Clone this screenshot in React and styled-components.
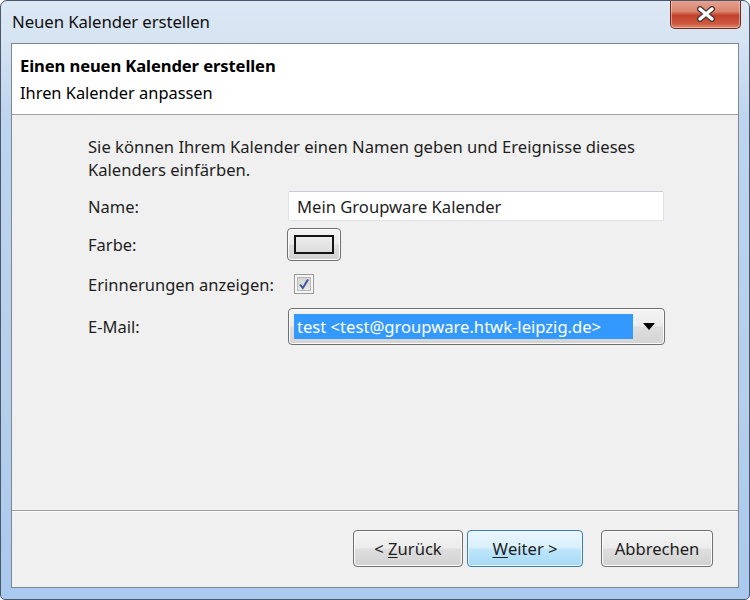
import React from "react";
import styled, { createGlobalStyle } from "styled-components";

const Global = createGlobalStyle`
  html, body { margin: 0; padding: 0; background: #ffffff; }
  body { font-family: "Noto Sans", "Open Sans", sans-serif; }
  * { box-sizing: border-box; }
`;

const Window = styled.div`
  width: 750px;
  height: 600px;
  display: flex;
  flex-direction: column;
  border: 1px solid #4a5869;
  border-radius: 7px 7px 5px 5px;
  background: linear-gradient(180deg, #dde8f4 0px, #d5e3f2 40px, #bcd4ee 120px, #b5cfec 400px, #a9c9ee 100%);
  overflow: hidden;
  font-family: "Noto Sans", "Open Sans", sans-serif;
  color: #1e1e1e;
`;

const TitleBar = styled.div`
  height: 42px;
  flex: none;
  display: flex;
  justify-content: space-between;
  align-items: flex-start;
  padding: 0 8px 0 11px;
`;

const Title = styled.div`
  font-size: 16.8px;
  line-height: 42px;
  color: #111;
  letter-spacing: -0.1px;
`;

const CloseButton = styled.div`
  width: 71px;
  height: 29px;
  margin-top: -1px;
  border: 1px solid #6b2a22;
  border-top: none;
  border-radius: 0 0 5px 5px;
  background: linear-gradient(180deg, #e8a493 0%, #d98670 40%, #c4402a 55%, #cc5a40 85%, #e08a6a 100%);
  box-shadow: inset 0 0 0 1px rgba(255, 220, 200, 0.5);
  display: flex;
  align-items: center;
  justify-content: center;
`;

const Client = styled.div`
  flex: 1;
  margin: 0 10px 11px 10px;
  border: 1px solid #7d8894;
  background: #f0f0f0;
  display: flex;
  flex-direction: column;
`;

const Header = styled.div`
  height: 71px;
  flex: none;
  background: #ffffff;
  border-bottom: 1px solid #a0a0a0;
  padding: 12px 0 0 8px;
`;

const HeaderTitle = styled.div`
  font-size: 16.6px;
  font-weight: 700;
  line-height: 20px;
  color: #000;
  letter-spacing: -0.1px;
`;

const HeaderSub = styled.div`
  font-size: 16.4px;
  line-height: 20px;
  margin-top: 7px;
  color: #000;
`;

const Body = styled.div`
  flex: 1;
  padding: 20px 0 0 76px;
  display: flex;
  flex-direction: column;
`;

const Intro = styled.p`
  margin: 0 0 6px 0;
  width: 600px;
  font-size: 16.6px;
  line-height: 23px;
  color: #1e1e1e;
`;

const Row = styled.div`
  height: ${(p) => p.$h}px;
  display: flex;
  align-items: center;
`;

const Label = styled.div`
  width: 200px;
  flex: none;
  font-size: 16.5px;
  color: #1e1e1e;
`;

const TextBox = styled.div`
  width: 376px;
  height: 30px;
  background: #fff;
  border: 1px solid #dfe3e8;
  border-top-color: #c9ccd1;
  border-radius: 2px;
  font-size: 16.6px;
  display: flex;
  align-items: center;
  padding-left: 8px;
  color: #1e1e1e;
`;

const ColorButton = styled.div`
  width: 54px;
  height: 33px;
  margin-left: -1px;
  border: 1px solid #707070;
  border-radius: 4px;
  background: linear-gradient(180deg, #f4f4f4 0%, #ececec 48%, #dedede 52%, #d2d2d2 100%);
  box-shadow: inset 0 0 0 1px #fcfcfc;
  display: flex;
  align-items: center;
  justify-content: center;
`;

const Swatch = styled.div`
  width: 40px;
  height: 19px;
  border: 2px solid #151515;
  background: linear-gradient(180deg, #ededed 0%, #dcdcdc 100%);
`;

const Check = styled.div`
  width: 20px;
  height: 20px;
  margin-left: 6px;
  border: 1px solid #9a9a9a;
  background: #f4f4f4;
  padding: 2px;
  display: flex;
`;

const CheckInner = styled.div`
  flex: 1;
  border: 1px solid #b8b8b8;
  background: linear-gradient(180deg, #d4d4d4 0%, #e8e8e8 100%);
  display: flex;
  align-items: center;
  justify-content: center;
`;

const Combo = styled.div`
  width: 377px;
  height: 37px;
  border: 1px solid #707070;
  border-radius: 4px;
  background: linear-gradient(180deg, #f4f4f4 0%, #ececec 48%, #dedede 52%, #d4d4d4 100%);
  box-shadow: inset 0 0 0 1px #fafafa;
  display: flex;
  align-items: center;
  padding: 0 0 0 5px;
`;

const Selected = styled.div`
  width: 339px;
  height: 25px;
  background: #3399ff;
  color: #fff;
  font-size: 16.6px;
  display: flex;
  align-items: center;
  padding-left: 3px;
  white-space: nowrap;
  overflow: hidden;
`;

const Arrow = styled.div`
  flex: 1;
  display: flex;
  justify-content: center;
  align-items: center;
`;

const Footer = styled.div`
  height: 77px;
  flex: none;
  border-top: 1px solid #a0a0a0;
  box-shadow: inset 0 1px 0 #fdfdfd;
  display: flex;
  align-items: flex-start;
  padding: 19px 25px 0 0;
  justify-content: flex-end;
`;

const Button = styled.div`
  width: ${(p) => p.$w}px;
  height: 37px;
  margin-left: ${(p) => p.$ml}px;
  border: 1px solid ${(p) => (p.$focus ? "#3c7fb1" : "#707070")};
  border-radius: 4px;
  background: ${(p) =>
    p.$focus
      ? "linear-gradient(180deg, #eaf6fd 0%, #d9f0fc 48%, #bee6fd 52%, #a7d9f5 100%)"
      : "linear-gradient(180deg, #f4f4f4 0%, #ececec 48%, #dedede 52%, #d2d2d2 100%)"};
  box-shadow: inset 0 0 0 1px ${(p) => (p.$focus ? "#e8f6fd" : "#fbfbfb")};
  display: flex;
  align-items: center;
  justify-content: center;
  font-size: 16.6px;
  color: #1e1e1e;
`;

const Mn = styled.span`
  text-decoration: underline;
  text-underline-offset: 2px;
`;

export default function App() {
  return (
    <>
      <Global />
      <Window>
        <TitleBar>
          <Title>Neuen Kalender erstellen</Title>
          <CloseButton>
            <svg width="20" height="16" viewBox="0 0 20 16">
              <path d="M4 3 L16 13 M16 3 L4 13" stroke="#4a3a36" strokeWidth="6" strokeLinecap="round" />
              <path d="M4 3 L16 13 M16 3 L4 13" stroke="#ffffff" strokeWidth="3.4" strokeLinecap="round" />
            </svg>
          </CloseButton>
        </TitleBar>
        <Client>
          <Header>
            <HeaderTitle>Einen neuen Kalender erstellen</HeaderTitle>
            <HeaderSub>Ihren Kalender anpassen</HeaderSub>
          </Header>
          <Body>
            <Intro>
              Sie können Ihrem Kalender einen Namen geben und Ereignisse dieses Kalenders einfärben.
            </Intro>
            <Row $h={38}>
              <Label>Name:</Label>
              <TextBox>Mein Groupware Kalender</TextBox>
            </Row>
            <Row $h={39}>
              <Label>Farbe:</Label>
              <ColorButton>
                <Swatch />
              </ColorButton>
            </Row>
            <Row $h={40}>
              <Label>Erinnerungen anzeigen:</Label>
              <Check>
                <CheckInner>
                  <svg width="12" height="12" viewBox="0 0 12 12">
                    <path d="M2 6.5 L4.8 10 L10 1.5" fill="none" stroke="#3f5896" strokeWidth="2" />
                  </svg>
                </CheckInner>
              </Check>
            </Row>
            <Row $h={44}>
              <Label>E-Mail:</Label>
              <Combo>
                <Selected>test &lt;test@groupware.htwk-leipzig.de&gt;</Selected>
                <Arrow>
                  <svg width="12" height="7" viewBox="0 0 12 7">
                    <path d="M0 0 H12 L6 7 Z" fill="#000" />
                  </svg>
                </Arrow>
              </Combo>
            </Row>
          </Body>
          <Footer>
            <Button $w={110} $ml={0}>
              &lt;&nbsp;<Mn>Z</Mn>urück
            </Button>
            <Button $w={116} $ml={4} $focus>
              <Mn>W</Mn>eiter &gt;
            </Button>
            <Button $w={112} $ml={18}>
              Abbrechen
            </Button>
          </Footer>
        </Client>
      </Window>
    </>
  );
}
